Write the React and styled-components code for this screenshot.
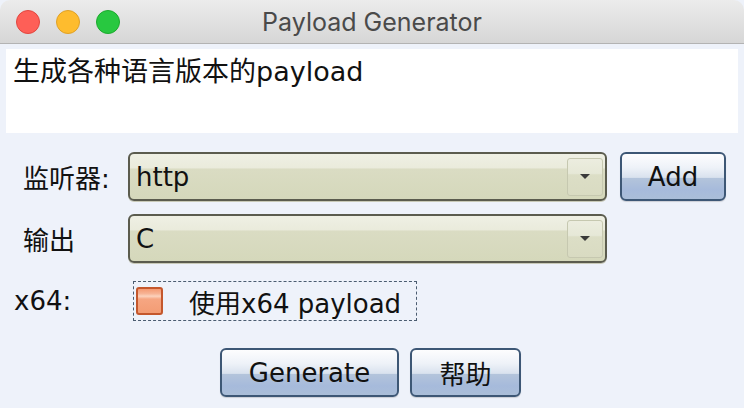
import styled, { createGlobalStyle } from 'styled-components'

const Global = createGlobalStyle`
  html, body {
    margin: 0;
    padding: 0;
    background: #eef2fa;
  }
`

const Window = styled.div`
  width: 744px;
  height: 408px;
  background: #eef2fa;
  font-family: "DejaVu Sans", "Noto Sans CJK SC", sans-serif;
  font-size: 26px;
  color: #111;
  overflow: hidden;
`

const TitleBar = styled.div`
  height: 43px;
  display: grid;
  grid-template-columns: 1fr auto 1fr;
  align-items: center;
  background: linear-gradient(#ececec, #d6d6d6);
  border-bottom: 1px solid #b3b3b3;
  border-radius: 10px 10px 0 0;
`

const Lights = styled.div`
  display: flex;
  gap: 16px;
  padding-left: 16px;
`

const Light = styled.span`
  width: 22px;
  height: 22px;
  border-radius: 50%;
  background: ${p => p.$fill};
  border: 1px solid ${p => p.$edge};
`

const Title = styled.div`
  font-family: Inter, "Noto Sans", sans-serif;
  font-size: 25px;
  color: #4a4a4a;
`

const Content = styled.div`
  padding: 5px 6px 0;
`

const Description = styled.div`
  height: 84px;
  box-sizing: border-box;
  padding: 7px 7px;
  background: #fff;
  font-size: 27px;
  line-height: 32px;
`

const Form = styled.div`
  display: flex;
  flex-direction: column;
  margin-top: 19px;
`

const Row = styled.div`
  display: flex;
  align-items: center;
  height: ${p => p.$height}px;
  margin-top: ${p => p.$gap}px;
`

const Label = styled.div`
  width: ${p => p.$width}px;
  box-sizing: border-box;
  padding-left: ${p => p.$indent}px;
  flex-shrink: 0;
`

const Combo = styled.div`
  width: 479px;
  height: 49px;
  box-sizing: border-box;
  display: flex;
  align-items: center;
  justify-content: space-between;
  padding: 0 2px 0 6px;
  border: 2px solid #5b5c4e;
  border-radius: 6px;
  background: linear-gradient(#eff0e4 0%, #eaebdc 30%, #dadcc3 34%, #d5d8bb 100%);
  box-shadow: 0 1px 0 #c9cab8;
`

const ArrowBox = styled.div`
  width: 36px;
  height: 38px;
  box-sizing: border-box;
  display: flex;
  align-items: center;
  justify-content: center;
  border: 1px solid #c6c8b0;
  border-radius: 3px;
  background: linear-gradient(#eceddf 0%, #e6e8d7 40%, #dcdec6 44%, #d9dbc2 100%);
`

const Triangle = styled.span`
  width: 0;
  height: 0;
  border-left: 5px solid transparent;
  border-right: 5px solid transparent;
  border-top: 5px solid #3a3a3a;
`

const Button = styled.button`
  width: ${p => p.$width}px;
  height: 49px;
  margin-left: ${p => p.$offset || 0}px;
  padding: 0;
  font: inherit;
  color: #111;
  border: 2px solid #3d5775;
  border-radius: 6px;
  background: linear-gradient(#fdfdfe 0%, #eef2f8 30%, #d9e2ee 52%, #b3c4db 54%, #a6badb 80%, #aabed8 100%);
  box-shadow: 0 1px 1px rgba(0, 0, 0, 0.15);
`

const Focus = styled.div`
  width: 284px;
  height: 40px;
  box-sizing: border-box;
  display: flex;
  align-items: center;
  gap: 26px;
  padding-left: 2px;
  border: 1px dashed #4b5c70;
`

const CheckBox = styled.span`
  width: 27px;
  height: 28px;
  box-sizing: border-box;
  border: 2px solid #c4572c;
  border-radius: 3px;
  background: linear-gradient(#f59a73 0%, #f7b596 20%, #fbd2bd 30%, #f6a682 42%, #f39c74 100%);
`

const Actions = styled.div`
  display: flex;
  justify-content: center;
  gap: 11px;
  margin-top: 27px;
  padding-right: 3px;
`

export default function App() {
  return (
    <Window>
      <Global />
      <TitleBar>
        <Lights>
          <Light $fill="#fe5f57" $edge="#e2463f" />
          <Light $fill="#febc2e" $edge="#e0a126" />
          <Light $fill="#28c840" $edge="#1caa2d" />
        </Lights>
        <Title>Payload Generator</Title>
        <span />
      </TitleBar>
      <Content>
        <Description>生成各种语言版本的payload</Description>
        <Form>
          <Row $height={49} $gap={0}>
            <Label $width={122} $indent={17}>监听器:</Label>
            <Combo>
              <span>http</span>
              <ArrowBox><Triangle /></ArrowBox>
            </Combo>
            <Button $width={106} $offset={13}>Add</Button>
          </Row>
          <Row $height={49} $gap={13}>
            <Label $width={122} $indent={17}>输出</Label>
            <Combo>
              <span>C</span>
              <ArrowBox><Triangle /></ArrowBox>
            </Combo>
          </Row>
          <Row $height={40} $gap={18}>
            <Label $width={127} $indent={8}>x64:</Label>
            <Focus>
              <CheckBox />
              <span>使用x64 payload</span>
            </Focus>
          </Row>
        </Form>
        <Actions>
          <Button $width={179}>Generate</Button>
          <Button $width={111}>帮助</Button>
        </Actions>
      </Content>
    </Window>
  )
}
